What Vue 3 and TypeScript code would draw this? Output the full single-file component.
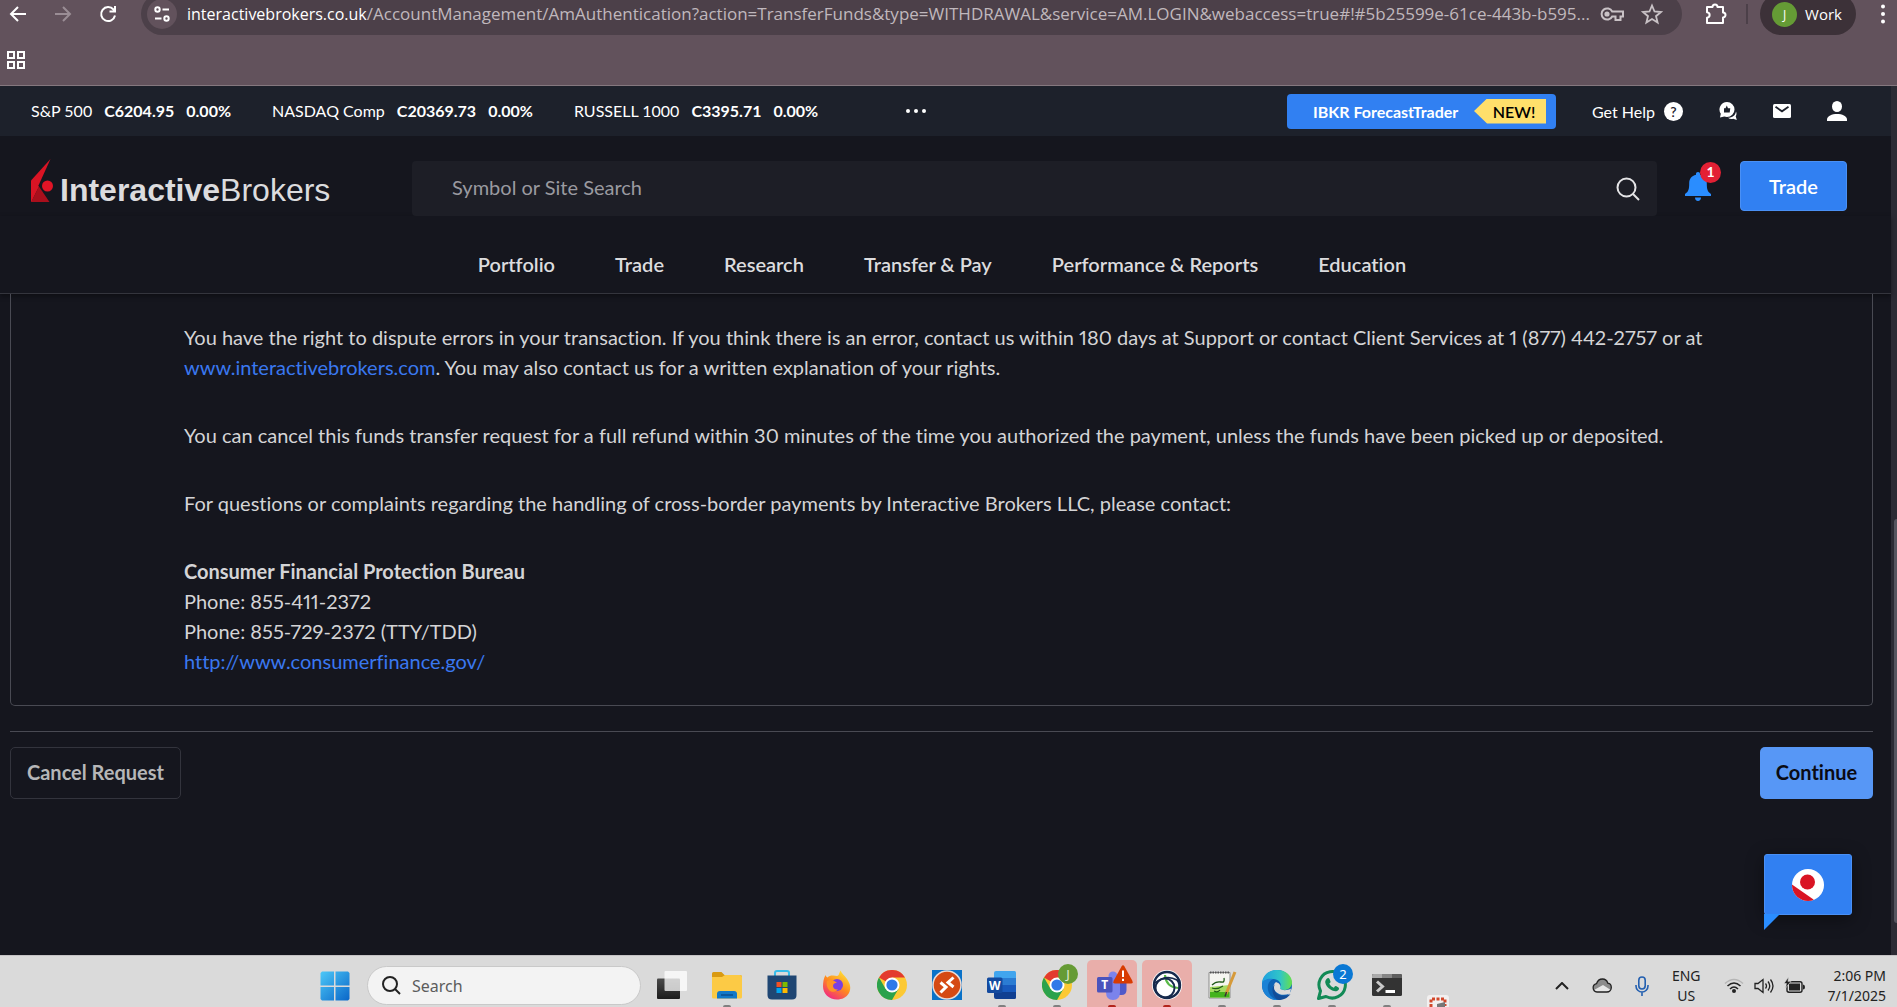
<script setup lang="ts">
import { ref } from 'vue'

interface Quote {
  name: string
  price: string
  change: string
}

const quotes: Quote[] = [
  { name: 'S&P 500', price: 'C6204.95', change: '0.00%' },
  { name: 'NASDAQ Comp', price: 'C20369.73', change: '0.00%' },
  { name: 'RUSSELL 1000', price: 'C3395.71', change: '0.00%' },
]

const menu: string[] = [
  'Portfolio',
  'Trade',
  'Research',
  'Transfer & Pay',
  'Performance & Reports',
  'Education',
]

const siteSearch = ref('')
const desktopSearch = ref('')
</script>

<template>
  <div class="screen">
    <header class="browser">
      <div class="toolbar">
        <button class="tool" aria-label="Back">
          <svg width="18" height="18" viewBox="0 0 18 18" fill="none" stroke="#fff" stroke-width="2"><path d="M17 9H2.500M9 2L2 9l7 7" /></svg>
        </button>
        <button class="tool" aria-label="Forward">
          <svg width="18" height="18" viewBox="0 0 18 18" fill="none" stroke="#9a8d95" stroke-width="2"><path d="M1 9h14.500M9 2l7 7-7 7" /></svg>
        </button>
        <button class="tool" aria-label="Reload">
          <svg width="18" height="18" viewBox="0 0 18 18" fill="none" stroke="#fff" stroke-width="2"><path d="M16 10.500A7 7 0 1 1 14.500 4.500L16 6M16 1v5.500h-5.500" /></svg>
        </button>
        <div class="address">
          <button class="site-info" aria-label="Site information">
            <svg width="16" height="16" viewBox="0 0 16 16" fill="none" stroke="#fff" stroke-width="2"><circle cx="3.500" cy="3.500" r="2.200" /><path d="M8.500 3.500H15M1 12.500h6.500" /><circle cx="12.500" cy="12.500" r="2.200" /></svg>
          </button>
          <span class="url"><span class="host">interactivebrokers.co.uk</span>/AccountManagement/AmAuthentication?action=TransferFunds&amp;type=WITHDRAWAL&amp;service=AM.LOGIN&amp;webaccess=true#!#5b25599e-61ce-443b-b595...</span>
          <button class="tool key" aria-label="Passwords">
            <svg width="24" height="16" viewBox="0 0 24 16" fill="none" stroke="#c9c2c6" stroke-width="2"><path d="M12.200 5.500A5.600 5.600 0 1 0 12.200 10.500H15.500V14h5v-3.500H23v-5z" /><circle cx="7" cy="8" r="1.600" fill="#c9c2c6" /></svg>
          </button>
          <button class="tool" aria-label="Bookmark">
            <svg width="22" height="22" viewBox="0 0 22 22" fill="none" stroke="#c9c2c6" stroke-width="1.800"><path d="M11 2.500l2.500 6 6.500.5-5 4.200 1.600 6.300L11 16l-5.600 3.500L7 13.200 2 9l6.500-.5z" /></svg>
          </button>
        </div>
        <button class="tool" aria-label="Extensions">
          <svg width="24" height="24" viewBox="0 0 24 24" fill="none" stroke="#fff" stroke-width="2"><path d="M3 5h5.500a2.500 2.500 0 0 1 5 0H19v5.500a2.500 2.500 0 0 1 0 5V21H3v-5.200c3.500-.5 3.500-5.100 0-5.600z" stroke-linejoin="round" /></svg>
        </button>
        <span class="bar"></span>
        <button class="profile"><span class="avatar">J</span>Work</button>
        <button class="tool" aria-label="Menu">
          <svg width="6" height="20" viewBox="0 0 6 20" fill="#fff"><circle cx="3" cy="2.500" r="2" /><circle cx="3" cy="10" r="2" /><circle cx="3" cy="17.500" r="2" /></svg>
        </button>
      </div>
      <div class="bookmarks">
        <button class="tool" aria-label="Apps">
          <svg width="18" height="18" viewBox="0 0 18 18" fill="none" stroke="#fff" stroke-width="2"><path d="M1 1h6v6H1zM11 1h6v6h-6zM1 11h6v6H1zM11 11h6v6h-6z" /></svg>
        </button>
      </div>
    </header>

    <div class="viewport">
      <div class="page">
        <div class="ticker">
          <div class="quotes">
            <div v-for="q in quotes" :key="q.name" class="quote">
              <span>{{ q.name }}</span><b>{{ q.price }}</b><b>{{ q.change }}</b>
            </div>
          </div>
          <button class="more" aria-label="More quotes">
            <svg width="20" height="4" viewBox="0 0 20 4" fill="#fff"><circle cx="2" cy="2" r="2" /><circle cx="10" cy="2" r="2" /><circle cx="18" cy="2" r="2" /></svg>
          </button>
          <div class="links">
            <button class="forecast"><span>IBKR ForecastTrader</span><span class="new">NEW!</span></button>
            <a href="#help" class="help">Get Help <span class="question">?</span></a>
            <a href="#chat" aria-label="Chat">
              <svg width="18" height="18" viewBox="0 0 18 18"><path d="M8 0a7.500 7.500 0 0 1 0 15c-1 0-2-.2-2.800-.5L1 15.500l.8-3.800A7.500 7.500 0 0 1 8 0z" fill="#fff" /><path d="M17 9.500c.8 1.800.6 3.500-.3 4.800L17.800 18l-3.600-1.200c-2 .5-3.700.2-5.200-1 4.500 0 7.500-2.500 8-6.300z" fill="#fff" /><path d="M7.800 3.500l1.200 2.700h2.300l-.6 4.300H5V6.300h1.500z" fill="#1d212b" /></svg>
            </a>
            <a href="#mail" aria-label="Messages">
              <svg width="18" height="14" viewBox="0 0 18 14"><rect width="18" height="14" rx="1.500" fill="#fff" /><path d="M2.500 2.800L9 7.300l6.500-4.500" fill="none" stroke="#1d212b" stroke-width="1.800" /></svg>
            </a>
            <a href="#user" aria-label="Account">
              <svg width="20" height="20" viewBox="0 0 20 20" fill="#fff"><ellipse cx="10" cy="5.500" rx="5" ry="5.500" /><path d="M0 20v-1.500C0 15 5 13 10 13s10 2 10 5.500V20z" /></svg>
            </a>
          </div>
        </div>

        <div class="head">
          <a href="#home" class="logo">
            <svg width="22" height="43" viewBox="0 0 22 43"><path d="M19.500 0L0 21.500V43z" fill="#d91424" /><path d="M0 43L8 27.500 18.500 43z" fill="#a90f1c" /><path d="M0 21.500V43l8-15.500z" fill="#d91424" /><circle cx="16.500" cy="27" r="5.500" fill="#e01426" /></svg>
            <span><b>Interactive</b>Brokers</span>
          </a>
          <label class="search">
            <input v-model="siteSearch" type="text" placeholder="Symbol or Site Search" aria-label="Symbol or Site Search" />
            <svg width="24" height="24" viewBox="0 0 24 24" fill="none" stroke="#e4e4e6" stroke-width="2"><circle cx="10.500" cy="10.500" r="9" /><path d="M17 17l6 6" /></svg>
          </label>
          <button class="bell" aria-label="Notifications">
            <svg width="26" height="29" viewBox="0 0 26 29" fill="#2a8dff"><path d="M13 0c1.300 0 2 .8 2 2v.8c4.500 1 6.800 4.200 6.800 8.700 0 6 .7 8 4.200 10.500V24H0v-2c3.500-2.500 4.200-4.500 4.200-10.500C4.200 7 6.500 3.800 11 2.800V2c0-1.200.7-2 2-2zM10 25.500h6c0 2-1.200 3.500-3 3.500s-3-1.500-3-3.500z" /></svg>
            <span class="count">1</span>
          </button>
          <button class="trade">Trade</button>
        </div>

        <nav class="menu">
          <a v-for="item in menu" :key="item" href="#menu">{{ item }}</a>
        </nav>

        <main>
          <section class="card">
            <p>You have the right to dispute errors in your transaction. If you think there is an error, contact us within 180 days at Support or contact Client Services at 1 (877) 442-2757 or at <a href="#ib">www.interactivebrokers.com</a>. You may also contact us for a written explanation of your rights.</p>
            <p>You can cancel this funds transfer request for a full refund within 30 minutes of the time you authorized the payment, unless the funds have been picked up or deposited.</p>
            <p>For questions or complaints regarding the handling of cross-border payments by Interactive Brokers LLC, please contact:</p>
            <p>
              <b>Consumer Financial Protection Bureau</b><br />
              Phone: 855-411-2372<br />
              Phone: 855-729-2372 (TTY/TDD)<br />
              <a href="#cfpb">http://www.consumerfinance.gov/</a>
            </p>
          </section>
          <div class="actions">
            <button class="cancel">Cancel Request</button>
            <button class="continue">Continue</button>
          </div>
        </main>

        <button class="bot" aria-label="Open assistant">
          <svg width="32" height="32" viewBox="0 0 32 32"><defs><clipPath id="disc"><circle cx="16" cy="16" r="16" /></clipPath></defs><g clip-path="url(#disc)"><rect width="32" height="32" fill="#fff" /><path d="M0 15.500L21.500 30.500V34H0z" fill="#d91424" /></g><circle cx="15.500" cy="13" r="7.500" fill="#d91424" /></svg>
        </button>
      </div>
      <div class="scrollbar"><span class="thumb"></span></div>
    </div>

    <footer class="taskbar">
      <button class="start" aria-label="Start">
        <svg width="30" height="30" viewBox="0 0 30 30"><defs><linearGradient id="win" x1="0" y1="0" x2="1" y2="1"><stop offset="0" stop-color="#4cc8f8" /><stop offset="1" stop-color="#0a66c8" /></linearGradient></defs><path d="M2 .5h12v14H.5V2zM15.500.5H28l1.500 1.500v12.500h-14zM.5 16H14v13.500H2L.5 28zM15.500 16h14v12L28 29.500H15.500z" fill="url(#win)" /></svg>
      </button>
      <label class="find">
        <svg width="19" height="19" viewBox="0 0 19 19" fill="none" stroke="#222" stroke-width="2"><circle cx="8" cy="8" r="7" /><path d="M13 13l5 5" /></svg>
        <input v-model="desktopSearch" type="text" placeholder="Search" aria-label="Search the desktop" />
      </label>
      <div class="apps">
        <button class="app" aria-label="Task view">
          <svg width="30" height="30" viewBox="0 0 30 30"><defs><linearGradient id="tv" x1="0" y1="0" x2="0" y2="1"><stop offset="0" stop-color="#4a4a4a" /><stop offset="1" stop-color="#1c1c1c" /></linearGradient></defs><rect y="8.500" width="23" height="20.500" rx="1" fill="url(#tv)" /><rect x="7.500" y="1" width="22.500" height="20" rx="1" fill="#fff" opacity=".75" /></svg>
        </button>
        <button class="app run" aria-label="File Explorer">
          <svg width="30" height="30" viewBox="0 0 30 30"><path d="M0 3.500Q0 2 1.500 2h8l3 3H28q2 0 2 2v5H0z" fill="#d99a12" /><path d="M0 7h10l3-2h15q2 0 2 2v20q0 1.500-1.500 1.500h-27Q0 28.500 0 27z" fill="#fcca45" /><path d="M5 28.500V24q0-3 3-3h14q3 0 3 3v4.500z" fill="#1279c8" /><path d="M9 25h12" stroke="#0b4f8f" stroke-width="1.500" /></svg>
        </button>
        <button class="app" aria-label="Store">
          <svg width="30" height="30" viewBox="0 0 30 30"><path d="M8 6V3q0-2 2-2h10q2 0 2 2v3" fill="none" stroke="#38bdea" stroke-width="2" /><path d="M.5 5.500h29V25q0 4.500-4.500 4.500H5Q.5 29.500.5 25z" fill="#1f4673" /><path d="M9.500 12h5v5h-5z" fill="#f25022" /><path d="M15.500 12h5v5h-5z" fill="#7fba00" /><path d="M9.500 18h5v5h-5z" fill="#00a4ef" /><path d="M15.500 18h5v5h-5z" fill="#ffb900" /></svg>
        </button>
        <button class="app" aria-label="Firefox">
          <svg width="30" height="30" viewBox="0 0 30 30"><defs><linearGradient id="fx" x1=".8" y1="0" x2=".2" y2="1"><stop offset="0" stop-color="#ffe93a" /><stop offset=".5" stop-color="#ff8a1e" /><stop offset="1" stop-color="#f0208a" /></linearGradient></defs><path d="M3.500 5c.3 1.300 1 2 2 2.500C7 6 8.500 5.500 10.500 5.500c1.500-.3 3 .5 4.500.5 2 0 2-3 3.500-5.500 1 3 4 5 6.500 8.500 3 4.500 4.500 9 2 14-2.500 4.500-7 6.500-12 6.500C7 29.500 1 23.500 1 16.500c0-4 .5-8 2.500-11.500z" fill="url(#fx)" /><circle cx="15" cy="15" r="6" fill="#7a3fe0" /><path d="M5 11c3-2 7-1 10 2-2 0-4 .5-4 3 0 2 2 4 5 3.500-3 3-7 3-9 .5S4 14 5 11z" fill="#ff9226" /></svg>
        </button>
        <button class="app" aria-label="Chrome">
          <svg width="30" height="30" viewBox="0 0 30 30"><circle cx="15" cy="15" r="15" fill="#fcc934" /><path d="M15 15L2 7.500A15 15 0 0 1 28 7.500z" fill="#e33b2e" /><path d="M15 15l6.500 3.700L15 30A15 15 0 0 1 2 7.500l6.500 11.200z" fill="#2ba24c" /><path d="M15 7.500h13L22 19z" fill="#fcc934" /><circle cx="15" cy="15" r="7.500" fill="#fff" /><circle cx="15" cy="15" r="5.600" fill="#3079e8" /></svg>
        </button>
        <button class="app" aria-label="Remote Desktop">
          <svg width="30" height="30" viewBox="0 0 30 30"><rect width="30" height="30" fill="#0a72c8" /><circle cx="15" cy="15" r="14" fill="#d54a14" stroke="#e8dcd8" stroke-width="1.500" /><path d="M8.500 12.500l5.500 4.500-5.500 5.500M21.500 7.500L16 12.500l5.500 4.500" fill="none" stroke="#fff" stroke-width="3" /></svg>
        </button>
        <button class="app run" aria-label="Word">
          <svg width="30" height="30" viewBox="0 0 30 30"><path d="M7 3q0-2 2-2h18.500q1.500 0 1.500 1.500V8H7z" fill="#41a5ee" /><path d="M7 8h22v7H7z" fill="#2b7cd3" /><path d="M7 15h22v7H7z" fill="#185abd" /><path d="M7 22h22v5.500q0 1.500-1.500 1.500H9q-2 0-2-2z" fill="#103f91" /><rect y="7.500" width="15.500" height="15.500" rx="1.500" fill="#134a9f" /><text x="7.700" y="19.500" text-anchor="middle" font-size="12" font-weight="700" fill="#fff" font-family="Noto Sans, sans-serif">W</text></svg>
        </button>
        <button class="app run" aria-label="Chrome, work profile">
          <svg width="30" height="30" viewBox="0 0 30 30"><circle cx="15" cy="15" r="15" fill="#fcc934" /><path d="M15 15L2 7.500A15 15 0 0 1 28 7.500z" fill="#e33b2e" /><path d="M15 15l6.500 3.700L15 30A15 15 0 0 1 2 7.500l6.500 11.200z" fill="#2ba24c" /><path d="M15 7.500h13L22 19z" fill="#fcc934" /><circle cx="15" cy="15" r="7.500" fill="#fff" /><circle cx="15" cy="15" r="5.600" fill="#3079e8" /></svg>
          <span class="badge green">J</span>
        </button>
        <button class="app run alert" aria-label="Teams">
          <svg width="30" height="30" viewBox="0 0 30 30"><circle cx="16" cy="6" r="4.500" fill="#7b83eb" /><path d="M19 11h10.500v9q0 5-5 5H19z" fill="#5059c9" /><path d="M9 10h14v12q0 8-7 8t-7-8z" fill="#7b83eb" /><rect y="7" width="15.500" height="15.500" rx="1.500" fill="#4b53bc" /><text x="7.700" y="19" text-anchor="middle" font-size="12" font-weight="700" fill="#fff" font-family="Noto Sans, sans-serif">T</text></svg>
          <svg class="warn" width="20" height="19" viewBox="0 0 20 19"><path d="M8.500 1.500q1.500-2.500 3 0l7.700 14Q20.500 18.500 18 18.500H2q-2.500 0-1.200-3z" fill="#d83b01" /><path d="M10 5.500v6.500M10 13.800v2.200" stroke="#fff" stroke-width="2" /></svg>
        </button>
        <button class="app run alert" aria-label="Secure client">
          <svg width="30" height="30" viewBox="0 0 30 30" fill="none"><circle cx="15" cy="15" r="15" fill="#fff" /><path d="M13 5q1 12 13 13" stroke="#59b947" stroke-width="2.200" /><circle cx="15" cy="15" r="13" stroke="#172a4d" stroke-width="2.400" /><circle cx="13" cy="18" r="9.500" stroke="#172a4d" stroke-width="2" /><path d="M3 13Q14 4 25 10q3 3 2 9" stroke="#172a4d" stroke-width="1.800" /></svg>
        </button>
        <button class="app run" aria-label="Notepad++">
          <svg width="30" height="30" viewBox="0 0 30 30"><path d="M2 2.500h21V28H2z" fill="#f5f5f0" stroke="#8d8d8d" /><path d="M3 17l19.500-2v12.500H3z" fill="#a5dc62" /><path d="M3 22h19.500v5.500H3z" fill="#44b31c" /><path d="M3 2.500h20" stroke="#555" stroke-width="2" stroke-dasharray="1.500 1" /><path d="M5 15q4-4 9-3 4 1 3-4M5 18q5 2 11-2M7 21q4 2 6-1" fill="none" stroke="#1f5a17" stroke-width="1.300" /><path d="M28 2L19 24" stroke="#d69a3a" stroke-width="3" /><path d="M19.500 22L18 26.500" stroke="#333" stroke-width="1.500" /></svg>
        </button>
        <button class="app run" aria-label="Edge">
          <svg width="30" height="30" viewBox="0 0 30 30"><defs><linearGradient id="eg" x1="0" y1=".3" x2="1" y2=".3"><stop offset="0" stop-color="#1f9fe0" /><stop offset=".6" stop-color="#30c5c8" /><stop offset="1" stop-color="#66e04a" /></linearGradient></defs><circle cx="15" cy="15" r="15" fill="#0d63b5" /><path d="M0 14C0 5 7 0 15 0c9 0 15 6 15 12.500 0 5-4 7.500-8 7.500-3 0-4.500-1-4-2.500 1.500-2 1-6.500-4-8C8 8 1 10 0 14z" fill="url(#eg)" /><path d="M0 15c0-5 6-7 11-6-4 2-6 6-5 11 1 5 4.500 8.500 9 10C6 30 0 23 0 15z" fill="#1b82d6" /><path d="M14 12c-3 2-3.500 7 0 10 4 3.500 9 3.500 14 1.500l1-5c-3 2-9 2.500-11 0 1-2 .5-5-4-6.500z" fill="#dadada" /><path d="M13 14c-2 3-1 8 3 10.500 4 2 9 1.500 12.500-.5-3 4.500-8 6-12 6C11 28 8 18 13 14z" fill="#124d98" /></svg>
        </button>
        <button class="app run" aria-label="WhatsApp">
          <svg width="30" height="30" viewBox="0 0 30 30" fill="none"><path d="M1.500 28.500l2-7.500A13.200 13.200 0 1 1 9 26.500z" stroke="#128a56" stroke-width="3" stroke-linejoin="round" /><path d="M10 8.500c1-1 2-.5 2.500.5l1 2.500c.3 1-.8 1.500-1.200 2.200 1 2 2.500 3.200 4.500 4 .8-.8 1.200-2 2.200-1.600l2.500 1.300c1 .6.5 2.600-1 3.400-2 1-4.500.5-7-1.200-3-2-5-4.500-5.300-7.300-.1-1.500.8-2.800 1.800-3.800z" fill="#128a56" /></svg>
          <span class="badge blue">2</span>
        </button>
        <button class="app run" aria-label="Terminal">
          <svg width="30" height="30" viewBox="0 0 30 30"><rect y="4" width="30" height="22" rx="1.500" fill="#333" /><path d="M0 8V5.500Q0 4 1.500 4H10v4z" fill="#aaa" /><path d="M10 4h10v4H10z" fill="#858585" /><path d="M20 4h8.500Q30 4 30 5.500V8H20z" fill="#5e5e5e" /><path d="M5 11.500l5.500 5-5.500 5" fill="none" stroke="#c9c9c9" stroke-width="3" /><path d="M13.500 21.500H23" stroke="#fff" stroke-width="3" /></svg>
        </button>
        <svg class="snip" width="22" height="22" viewBox="0 0 22 22"><rect width="22" height="22" rx="3" fill="#f2f0f0" /><path d="M4 12V4h14v7" fill="none" stroke="#d2472a" stroke-width="3" stroke-dasharray="3 1.500" /><path d="M10 12V9l8-2v5z" fill="#777" /></svg>
      </div>
      <div class="tray">
        <svg width="14" height="8" viewBox="0 0 14 8" fill="none" stroke="#222" stroke-width="2"><path d="M1 7l6-6 6 6" /></svg>
        <svg width="20" height="15" viewBox="0 0 20 15"><path d="M5 14a4.200 4.200 0 0 1-.5-8.300C5.500 2.500 8 1 10.500 1c2.800 0 4.500 1.500 5.300 4.200C18 5.500 19.300 7.300 19.300 9.500c0 2.500-2 4.500-4.500 4.500z" fill="#8b8b8b" /><path d="M2 12l9-5 7 4.500q-1.500 2.500-3.500 2.500H5q-2 0-3-2z" fill="#e6e6e6" /><path d="M5 14a4.200 4.200 0 0 1-.5-8.300C5.500 2.500 8 1 10.500 1c2.800 0 4.500 1.500 5.300 4.200C18 5.500 19.300 7.300 19.300 9.500c0 2.500-2 4.500-4.500 4.500z" fill="none" stroke="#222" stroke-width="1.300" /></svg>
        <svg width="14" height="20" viewBox="0 0 14 20" fill="none" stroke="#2460b0" stroke-width="1.600"><rect x="3.800" y="1" width="6.400" height="12" rx="3.200" /><path d="M1 9v1a6 6 0 0 0 12 0V9M7 16v4" /></svg>
        <span class="lang">ENG<br />US</span>
        <div class="status">
          <svg width="20" height="16" viewBox="0 0 20 16" fill="none" stroke-width="1.500"><path d="M1 5.500Q10-2.500 19 5.500" stroke="#b5b5b5" /><path d="M3.500 8Q10 2 16.500 8M6 11q4-4 8 0" stroke="#222" /><circle cx="10" cy="13" r="2" fill="#222" /></svg>
          <svg width="20" height="16" viewBox="0 0 20 16" fill="none" stroke="#222" stroke-width="1.300"><path d="M1 5.500h3L9 1.500v13l-5-4H1zM11.500 5.500q2 2.500 0 5M14 3.500q3.500 4.500 0 9M16.500 1.500q5 6.500 0 13" /></svg>
          <svg width="21" height="17" viewBox="0 0 21 17"><rect x="3" y="4.700" width="15" height="10.500" rx="2" fill="none" stroke="#222" stroke-width="1.400" /><path d="M5 6.500h11v7H5z" fill="#222" /><path d="M19 7.500q2 0 2 2.500t-2 2.500z" fill="#222" /><path d="M4.500 0L0 6.500h2.500L1.500 11 7 4.500H4z" fill="#222" stroke="#dadada" stroke-width=".6" /></svg>
        </div>
        <time class="clock">2:06 PM<br />7/1/2025</time>
      </div>
    </footer>
  </div>
</template>

<style>
html,
body {
  margin: 0;
  overflow: hidden;
  background: #15161e;
}
</style>

<style scoped>
.screen {
  display: flex;
  flex-direction: column;
  min-height: 100vh;
  overflow: hidden;
  font-family: Lato, 'Liberation Sans', sans-serif;
  font-variant-ligatures: no-common-ligatures;
}
button,
input {
  margin: 0;
  padding: 0;
  border: 0;
  background: none;
  font: inherit;
  color: inherit;
}
a {
  color: inherit;
  text-decoration: none;
}
svg {
  display: block;
  flex: none;
}

/* browser */
.browser {
  background: #62525c;
  border-bottom: 1px solid #85787f;
  font-family: 'Open Sans', sans-serif;
  color: #fff;
}
.toolbar {
  display: flex;
  align-items: center;
  height: 42px;
  margin-top: -7px;
  padding: 0 2px 0 6px;
}
.tool {
  display: grid;
  place-items: center;
  flex: none;
  width: 24px;
  height: 24px;
  margin-right: 21px;
}
.address {
  display: flex;
  flex: 1;
  min-width: 0;
  align-items: center;
  height: 42px;
  margin-right: 22px;
  padding: 0 6px;
  border-radius: 21px;
  background: #4c4049;
}
.address .tool {
  margin-right: 12px;
}
.address .key {
  margin-right: 16px;
}
.site-info {
  display: grid;
  place-items: center;
  flex: none;
  width: 30px;
  height: 30px;
  border-radius: 50%;
  background: #62525c;
}
.url {
  flex: 1;
  min-width: 0;
  margin: 0 4px 0 10px;
  overflow: hidden;
  white-space: nowrap;
  font-size: 17px;
  line-height: 24px;
  color: #c0b8bd;
}
.host {
  color: #fff;
  font-size: 16px;
}
.toolbar > .tool:last-child {
  margin-right: 0;
}
.bar {
  width: 2px;
  height: 20px;
  margin: 0 12px 0 -3px;
  background: #4c4049;
}
.profile {
  display: flex;
  align-items: center;
  gap: 8px;
  height: 42px;
  margin-right: 15px;
  padding: 0 14px 0 12px;
  border-radius: 21px;
  background: #3c3138;
  font-size: 15px;
}
.avatar {
  width: 25px;
  height: 25px;
  border-radius: 50%;
  background: #659b35;
  font-size: 12px;
  line-height: 25px;
  text-align: center;
}
.bookmarks {
  display: flex;
  align-items: center;
  height: 50px;
  padding-left: 4px;
}

/* page */
.viewport {
  display: flex;
  flex: 1;
}
.page {
  position: relative;
  flex: 1;
  min-width: 0;
  background: #15161e;
}
.scrollbar {
  display: flex;
  flex-direction: column;
  width: 6px;
  background: #2b2b34;
}
.scrollbar::before {
  content: '';
  flex: 433;
}
.scrollbar::after {
  content: '';
  flex: 32;
}
.thumb {
  flex: 404;
  margin-left: 3px;
  border-radius: 4px 0 0 4px;
  background: #55555f;
}
.ticker {
  display: flex;
  align-items: center;
  height: 50px;
  padding: 0 44px 0 31px;
  background: #1d212b;
  color: #fff;
  font-size: 16px;
}
.quotes {
  display: flex;
  gap: 41px;
  padding-bottom: 2px;
}
.quote {
  display: flex;
  gap: 12px;
}
.more {
  margin-left: 88px;
}
.links {
  display: flex;
  align-items: center;
  gap: 36px;
  margin-left: auto;
}
.forecast {
  display: flex;
  align-items: center;
  justify-content: space-between;
  width: 269px;
  height: 35px;
  padding: 0 10px 0 26px;
  border-radius: 4px;
  background: #3180f2;
  font-weight: 700;
}
.new {
  width: 72px;
  box-sizing: border-box;
  padding-left: 8px;
  background: #ffdf6b;
  clip-path: polygon(0 50%, 13px 0, 100% 0, 100% 100%, 13px 100%);
  color: #000;
  font-weight: 600;
  line-height: 25px;
}
.help {
  display: flex;
  align-items: center;
  gap: 9px;
}
.question {
  width: 19px;
  height: 19px;
  border-radius: 50%;
  background: #fff;
  color: #1d212b;
  font-size: 14px;
  font-weight: 600;
  line-height: 19px;
  text-align: center;
}
.head {
  display: flex;
  align-items: flex-start;
  padding: 25px 44px 0 31px;
}
.logo {
  display: flex;
  align-items: flex-end;
  gap: 7px;
  flex: none;
  width: 381px;
  height: 41px;
  color: #dcdcde;
  font-family: 'Liberation Sans', sans-serif;
  font-size: 32px;
  line-height: 32px;
}
.logo span {
  margin-bottom: -4px;
}
.search {
  display: flex;
  flex: 1;
  align-items: center;
  height: 55px;
  padding: 0 17px 0 40px;
  border-radius: 4px;
  background: #1d1e26;
}
.search input {
  flex: 1;
  min-width: 0;
  padding-bottom: 4px;
  outline: 0;
  color: #fff;
  font-size: 20px;
}
.search input::placeholder {
  color: #9a9aa0;
  opacity: 1;
}
.bell {
  position: relative;
  height: 50px;
  margin: 0 29px 0 28px;
}
.count {
  position: absolute;
  top: 1px;
  left: 15px;
  width: 21px;
  height: 21px;
  border-radius: 50%;
  background: #e32034;
  color: #fff;
  font-size: 14px;
  font-weight: 700;
  line-height: 20px;
  text-align: center;
}
.trade {
  width: 107px;
  height: 50px;
  border: 1px solid #4a90f5;
  border-radius: 4px;
  background: #3180f2;
  color: #fff;
  font-size: 20px;
  font-weight: 600;
}
.menu {
  display: flex;
  justify-content: center;
  gap: 60px;
  padding: 36px 7px 17px 0;
  border-bottom: 1px solid #34353d;
  box-shadow: 0 2px 5px rgba(0, 0, 0, 0.4);
  color: #dcdcde;
  font-size: 20px;
  font-weight: 600;
  line-height: 24px;
}
main {
  padding: 0 18px 0 10px;
}
.card {
  padding: 28px 140px 29px 173px;
  border: 1px solid #494a53;
  border-top: 0;
  border-radius: 0 0 5px 5px;
  color: #d4d4d6;
  font-size: 20px;
  font-variant-numeric: proportional-nums;
  line-height: 30px;
}
.card p {
  margin: 0 0 38px;
}
.card p:last-child {
  margin: 0;
}
.card a {
  color: #3a78f0;
}
.actions {
  display: flex;
  justify-content: space-between;
  margin-top: 25px;
  padding-top: 15px;
  border-top: 1px solid #494a53;
}
.actions button {
  height: 52px;
  padding-bottom: 2px;
  border-radius: 5px;
  font-size: 20px;
  font-weight: 700;
}
.cancel {
  width: 171px;
  border: 1px solid #33343d;
  color: #b6b6b8;
}
.continue {
  width: 113px;
  background: #5797f6;
  color: #0a0b14;
}
.bot {
  position: absolute;
  right: 39px;
  bottom: 40px;
  display: grid;
  place-items: center;
  width: 88px;
  height: 61px;
  border: 1px solid #4a90f5;
  border-radius: 3px;
  background: #3180f2;
  box-shadow: 0 4px 18px rgba(0, 0, 0, 0.4);
}
.bot::after {
  content: '';
  position: absolute;
  top: 59px;
  left: -1px;
  border-top: 16px solid #2a8dff;
  border-right: 16px solid transparent;
}

/* taskbar */
.taskbar {
  display: flex;
  align-items: flex-start;
  height: 51px;
  padding: 0 11px 0 320px;
  overflow: hidden;
  border-top: 1px solid #c4c2c4;
  background: #dadada;
  color: #222;
  font-family: 'Noto Sans', sans-serif;
}
.start {
  margin: 15px 17px 0 0;
}
.find {
  display: flex;
  align-items: center;
  gap: 11px;
  box-sizing: border-box;
  width: 274px;
  height: 39px;
  margin: 10px 6px 0 0;
  padding: 0 14px;
  border: 1px solid #c9c9c9;
  border-radius: 20px;
  background: #f3f3f3;
}
.find input {
  width: 100%;
  outline: 0;
  font-size: 16px;
}
.find input::placeholder {
  color: #5c5c5c;
  opacity: 1;
}
.apps {
  display: flex;
  gap: 5px;
}
.app {
  position: relative;
  display: grid;
  justify-items: center;
  align-content: start;
  width: 50px;
  height: 56px;
  margin-top: 4px;
  padding-top: 10px;
  border-radius: 5px;
}
.run::after {
  content: '';
  position: absolute;
  top: 45px;
  left: 21px;
  width: 8px;
  height: 4px;
  border-radius: 2px;
  background: #808080;
}
.alert {
  background: #e9aeaa;
}
.alert::after {
  background: #b3241c;
}
.badge {
  position: absolute;
  top: 4px;
  right: 4px;
  width: 20px;
  height: 20px;
  border-radius: 50%;
  color: #fff;
  font-size: 13px;
  line-height: 20px;
}
.green {
  background: #659b35;
  color: #e2ecd6;
}
.blue {
  background: #0a78d4;
}
.warn {
  position: absolute;
  top: 5px;
  right: 4px;
}
.snip {
  margin-top: 39px;
  margin-left: 10px;
}
.tray {
  display: flex;
  align-items: center;
  gap: 23px;
  height: 59px;
  margin-left: auto;
  font-size: 14px;
  line-height: 20px;
}
.lang {
  text-align: center;
}
.status {
  display: flex;
  align-items: center;
  gap: 10px;
}
.clock {
  text-align: right;
}
</style>
